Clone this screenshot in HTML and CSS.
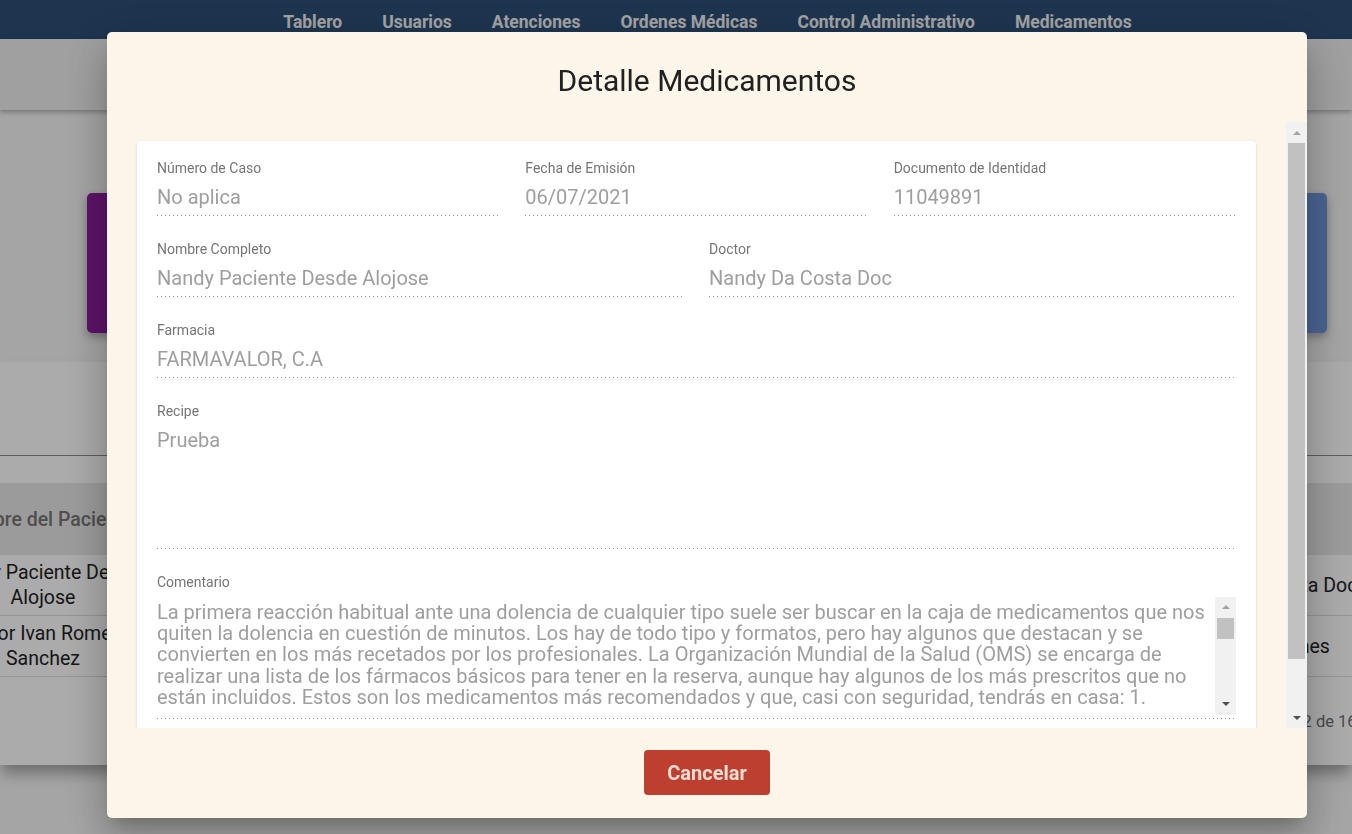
FILE: index.html
```html
<!DOCTYPE html>
<html lang="es">
<head>
<meta charset="utf-8">
<title>Detalle Medicamentos</title>
<link rel="stylesheet" href="styles.css">
</head>
<body>
<div class="page">
  <nav class="topnav">
    <a href="#">Tablero</a>
    <a href="#">Usuarios</a>
    <a href="#">Atenciones</a>
    <a href="#">Ordenes Médicas</a>
    <a href="#">Control Administrativo</a>
    <a href="#">Medicamentos</a>
  </nav>
  <div class="toolbar"></div>
  <main class="content">
    <div class="stats">
      <div class="stat stat-purple"></div>
      <div class="stat stat-green"></div>
      <div class="stat stat-orange"></div>
      <div class="stat stat-blue"></div>
    </div>
    <section class="table-card">
      <div class="table-top"></div>
      <div class="trow thead">
        <div class="cell-first">Nombre del Paciente</div>
        <div class="cell-mid"></div>
        <div class="cell-last">Doctor</div>
      </div>
      <div class="trow tbody">
        <div class="cell-first">Nandy Paciente Desde Alojose</div>
        <div class="cell-mid"></div>
        <div class="cell-last">Nandy Da Costa Doc</div>
      </div>
      <div class="trow tbody">
        <div class="cell-first">Héctor Ivan Romero Sanchez</div>
        <div class="cell-mid"></div>
        <div class="cell-last">Rolando Limones</div>
      </div>
      <div class="trow pager">
        <div class="cell-first"></div>
        <div class="cell-mid"></div>
        <div class="cell-last"><span class="pager-text">11 - 12 de 16</span></div>
      </div>
    </section>
  </main>
</div>

<div class="overlay"></div>

<div class="dialog-layer">
  <div class="dialog">
    <h2 class="dialog-title">Detalle Medicamentos</h2>
    <div class="dialog-body">
      <div class="dialog-scroll">
        <div class="card">
          <div class="grid3">
            <div class="field">
              <div class="field-label">Número de Caso</div>
              <div class="field-value">No aplica</div>
            </div>
            <div class="field">
              <div class="field-label">Fecha de Emisión</div>
              <div class="field-value">06/07/2021</div>
            </div>
            <div class="field">
              <div class="field-label">Documento de Identidad</div>
              <div class="field-value">11049891</div>
            </div>
          </div>
          <div class="grid2">
            <div class="field">
              <div class="field-label">Nombre Completo</div>
              <div class="field-value">Nandy Paciente Desde Alojose</div>
            </div>
            <div class="field">
              <div class="field-label">Doctor</div>
              <div class="field-value">Nandy Da Costa Doc</div>
            </div>
          </div>
          <div class="field field-full">
            <div class="field-label">Farmacia</div>
            <div class="field-value">FARMAVALOR, C.A</div>
          </div>
          <div class="field">
            <div class="field-label">Recipe</div>
            <div class="field-value field-tall">Prueba</div>
          </div>
          <div class="field">
            <div class="field-label field-label-tight">Comentario</div>
            <div class="textarea">
              <div class="ta-text">
                <div class="ta-clip">La primera reacción habitual ante una dolencia de cualquier tipo suele ser buscar en la caja de medicamentos que nos quiten la dolencia en cuestión de minutos. Los hay de todo tipo y formatos, pero hay algunos que destacan y se convierten en los más recetados por los profesionales. La Organización Mundial de la Salud (OMS) se encarga de realizar una lista de los fármacos básicos para tener en la reserva, aunque hay algunos de los más prescritos que no están incluidos. Estos son los medicamentos más recomendados y que, casi con seguridad, tendrás en casa: 1. Paracetamol. Es uno de los analgésicos más utilizados para tratar el dolor leve o moderado y para bajar la fiebre. 2. Ibuprofeno. Es un antiinflamatorio no esteroideo que se utiliza para aliviar el dolor, la fiebre y la inflamación.</div>
              </div>
              <div class="sb sb-small">
                <div class="sb-btn"><span class="tri-up"></span></div>
                <div class="sb-track"><div class="sb-thumb sb-thumb-small"></div></div>
                <div class="sb-btn"><span class="tri-down"></span></div>
              </div>
            </div>
          </div>
        </div>
      </div>
      <div class="sb sb-dialog">
        <div class="sb-btn"><span class="tri-up"></span></div>
        <div class="sb-track"><div class="sb-thumb sb-thumb-dialog"></div></div>
        <div class="sb-btn"><span class="tri-down"></span></div>
      </div>
    </div>
    <div class="dialog-actions">
      <button class="btn-cancel" type="button">Cancelar</button>
    </div>
  </div>
</div>
</body>
</html>
```

FILE: styles.css
```css
html, body {
  margin: 0;
  padding: 0;
}

body {
  width: 1352px;
  height: 834px;
  overflow: hidden;
  background: #f6f6f6;
  font-family: Roboto, "Liberation Sans", Arial, sans-serif;
}

/* ---------- background page ---------- */
.page {
  width: 1352px;
}

.topnav {
  height: 39px;
  background: #2d4f77;
  display: flex;
  justify-content: center;
  align-items: flex-start;
  gap: 40px;
  padding-left: 63px;
  box-sizing: border-box;
}

.topnav a {
  color: #f4f4f4;
  text-decoration: none;
  font-weight: 700;
  font-size: 17.5px;
  line-height: 20px;
  padding-top: 11.5px;
}

.toolbar {
  height: 71px;
  background: #efefef;
  box-shadow: 0 2px 5px rgba(0, 0, 0, 0.3);
  position: relative;
}

.content {
  padding: 83px 25px 0 87px;
}

.stats {
  display: grid;
  grid-template-columns: repeat(4, 1fr);
  gap: 24px;
}

.stat {
  height: 140px;
  border-radius: 5px;
  box-shadow: 0 4px 10px rgba(0, 0, 0, 0.3);
}

.stat-purple { background: #8c1b9d; }
.stat-green { background: #2e9a5a; }
.stat-orange { background: #e58a2c; }
.stat-blue { background: #6e95d9; }

.table-card {
  margin: 29px -25px 0 -87px;
  height: 403px;
  background: #ffffff;
  box-shadow: 0 10px 14px -2px rgba(0, 0, 0, 0.35);
  overflow: hidden;
}

.table-top {
  height: 93px;
  border-bottom: 1px solid #8c8c8c;
  margin-bottom: 27px;
}

.trow {
  display: grid;
  grid-template-columns: 246px 1fr 189px;
  width: 1432px;
  margin-left: -80px;
  align-items: center;
}

.thead {
  height: 72px;
  background: #e8e8e8;
  color: #757575;
  font-weight: 500;
  font-size: 19.5px;
}

.tbody {
  height: 60px;
  border-bottom: 1px solid #dedede;
  color: #222222;
  font-size: 19.5px;
}

.tbody:first-of-type {
  height: 59px;
}

.cell-first {
  text-align: center;
  line-height: 25px;
}

.cell-last {
  padding-left: 16px;
  white-space: nowrap;
}

.pager {
  height: 88px;
  color: #6f6f6f;
  font-size: 16.5px;
}

.pager-text {
  padding-left: 83px;
}

.overlay {
  position: fixed;
  inset: 0;
  background: rgba(0, 0, 0, 0.33);
}

/* ---------- dialog ---------- */
.dialog-layer {
  position: fixed;
  inset: 0;
  padding: 32px 0 0 107px;
}

.dialog {
  width: 1200px;
  height: 786px;
  background: #fcf5ea;
  border-radius: 5px;
  box-shadow: 0 11px 15px -7px rgba(0, 0, 0, 0.2),
              0 24px 38px 3px rgba(0, 0, 0, 0.14),
              0 9px 46px 8px rgba(0, 0, 0, 0.12);
  display: flex;
  flex-direction: column;
  overflow: hidden;
}

.dialog-title {
  margin: 0;
  height: 90px;
  flex: none;
  box-sizing: border-box;
  padding-top: 31px;
  text-align: center;
  font-size: 30px;
  line-height: 35px;
  font-weight: 400;
  color: #212121;
}

.dialog-body {
  height: 606px;
  flex: none;
  display: flex;
}

.dialog-scroll {
  flex: 1;
  overflow: hidden;
  padding: 19px 30px 0 30px;
}

.card {
  background: #ffffff;
  border-radius: 4px;
  box-shadow: 0 1px 3px rgba(0, 0, 0, 0.14);
  padding: 19px 20px 20px;
}

.grid3 {
  display: grid;
  grid-template-columns: repeat(3, 1fr);
  column-gap: 26px;
}

.grid2 {
  display: grid;
  grid-template-columns: repeat(2, 1fr);
  column-gap: 25px;
}

.field {
  margin-bottom: 25px;
}

.field-full {
  margin-right: 2px;
}

.field-label {
  font-size: 14px;
  line-height: 16px;
  color: #757575;
  margin-bottom: 9px;
}

.field-label-tight {
  margin-bottom: 6.5px;
}

.field-value,
.textarea {
  background-image: linear-gradient(to right, rgba(0, 0, 0, 0.42) 0, rgba(0, 0, 0, 0.42) 33%, transparent 33%);
  background-size: 4px 1px;
  background-repeat: repeat-x;
  background-position: left bottom;
}

.field-value {
  font-size: 20px;
  line-height: 24px;
  color: #9e9e9e;
  padding-bottom: 7px;
  white-space: nowrap;
}

.field-tall {
  height: 114px;
}

.textarea {
  display: flex;
  padding-bottom: 4px;
}

.ta-text {
  flex: 1;
  padding: 5px 0 6.3px;
}

.ta-clip {
  height: 106.7px;
  overflow: hidden;
  font-size: 20px;
  line-height: 21.34px;
  color: #9e9e9e;
}

/* ---------- fake scrollbars ---------- */
.sb {
  width: 21px;
  flex: none;
  background: #f1f1f1;
  display: flex;
  flex-direction: column;
}

.sb-small {
  height: 118px;
}

.sb-btn {
  height: 21px;
  flex: none;
  display: flex;
  align-items: center;
  justify-content: center;
}

.sb-track {
  flex: 1;
  display: flex;
  flex-direction: column;
}

.sb-thumb {
  margin: 0 2px;
  background: #c1c1c1;
}

.sb-thumb-small {
  height: 21px;
}

.sb-thumb-dialog {
  height: 516px;
}

.tri-up,
.tri-down {
  width: 0;
  height: 0;
  border-left: 4px solid transparent;
  border-right: 4px solid transparent;
}

.tri-up {
  border-bottom: 4px solid #a3a3a3;
}

.tri-down {
  border-top: 4px solid #505050;
}

/* ---------- actions ---------- */
.dialog-actions {
  flex: 1;
  display: flex;
  justify-content: center;
  align-items: flex-start;
  padding-top: 22px;
}

.btn-cancel {
  height: 45px;
  padding: 0 23px;
  border: none;
  border-radius: 4px;
  background: #bc3f30;
  color: #ecdcd0;
  font-family: Roboto, "Liberation Sans", Arial, sans-serif;
  font-weight: 700;
  font-size: 20px;
  cursor: pointer;
}
```
